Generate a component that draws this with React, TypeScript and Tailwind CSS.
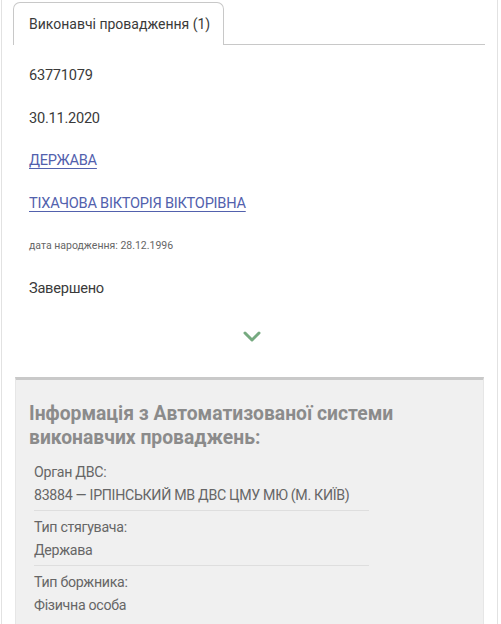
const rows = [
  { text: "63771079" },
  { text: "30.11.2020" },
  { text: "ДЕРЖАВА", link: true },
  { text: "ТІХАЧОВА ВІКТОРІЯ ВІКТОРІВНА", link: true },
  { text: "дата народження: 28.12.1996", small: true },
  { text: "Завершено" },
];

const fields = [
  { label: "Орган ДВС:", value: "83884 — ІРПІНСЬКИЙ МВ ДВС ЦМУ МЮ (М. КИЇВ)" },
  { label: "Тип стягувача:", value: "Держава" },
  { label: "Тип боржника:", value: "Фізична особа" },
];

export default function App() {
  return (
    <div className="w-[501px] h-[624px] overflow-hidden bg-white font-['Roboto',sans-serif]">
      <div className="ml-[1px] w-[497px] h-full border-x border-[#e2e2e2]">
        <div className="flex items-end pt-[2px] pl-[11px] pr-[12px]">
          <div className="h-[43px] pl-[15px] pr-[13px] flex items-center border border-b-0 border-[#c8c8c8] rounded-t-[7px] text-[14px] text-[#3a3a3a]">
            Виконавчі провадження (1)
          </div>
          <div className="flex-1 border-b border-[#c8c8c8]" />
        </div>

        <div className="flex flex-col gap-[22.6px] pl-[27px] pt-[20px]">
          {rows.map((r) =>
            r.small ? (
              <div key={r.text} className="h-[20px] flex items-center text-[10.5px] text-[#666]">
                {r.text}
              </div>
            ) : r.link ? (
              <a
                key={r.text}
                href="#"
                className="h-[20px] leading-[20px] text-[14.6px] tracking-[-0.25px] text-[#5261ad] underline underline-offset-[3px] decoration-[1px] self-start"
              >
                {r.text}
              </a>
            ) : (
              <div key={r.text} className="h-[20px] leading-[20px] text-[14.6px] tracking-[-0.25px] text-[#3a3a3a]">
                {r.text}
              </div>
            )
          )}
        </div>

        <div className="flex justify-center pt-[33px] pl-[5px]">
          <svg width="18" height="12" viewBox="0 0 18 12">
            <path d="M2 2 L9 9 L16 2" fill="none" stroke="#76aa80" strokeWidth="3" strokeLinecap="round" strokeLinejoin="round" />
          </svg>
        </div>

        <div className="mt-[34px] mx-[13px] bg-[#f0f0f0] border-t-[3px] border-[#c9c9c9] border-x border-x-[#e6e6e6] pt-[22px] pb-[20px]">
          <div className="pl-[13px] text-[19.3px] leading-[24px] font-bold text-[#8b8b8b]">
            Інформація з Автоматизованої системи
            <br />
            виконавчих проваджень:
          </div>
          <div className="mt-[11px] pl-[18px] flex flex-col">
            {fields.map((f, i) => (
              <div
                key={f.label}
                className={
                  "w-[335px] " + (i < fields.length - 1 ? "pb-[3px] mb-[5px] border-b border-[#dedede]" : "")
                }
              >
                <div className="text-[14.2px] tracking-[-0.3px] leading-[23px] text-[#666] whitespace-nowrap">{f.label}</div>
                <div className="text-[14.2px] tracking-[-0.3px] leading-[23px] text-[#666] whitespace-nowrap">{f.value}</div>
              </div>
            ))}
          </div>
        </div>
      </div>
    </div>
  );
}
